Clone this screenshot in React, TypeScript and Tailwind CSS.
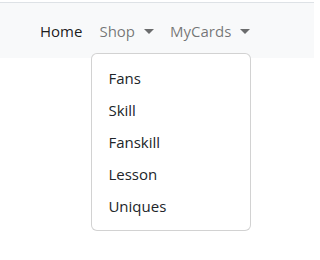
import { useState } from 'react'

const SHOP_ITEMS = ['Fans', 'Skill', 'Fanskill', 'Lesson', 'Uniques']

const Caret = () => (
  <span className="ml-[9px] inline-block align-[0.2em] border-x-[5px] border-t-[5px] border-x-transparent border-t-[#6b6c6d]" />
)

const App = () => {
  const [open, setOpen] = useState(true)

  return (
    <div className="h-[260px] w-[314px] bg-white pt-[2px] font-['Open_Sans','Noto_Sans',sans-serif] text-[15px] leading-6">
      <nav className="flex h-[56px] items-center border-t border-[#dee2e6] bg-[#f8f9fa] pl-[32px]">
        <ul className="flex">
          <li>
            <a className="block py-2 pl-2 pr-[9px] text-black/90">Home</a>
          </li>
          <li className="relative">
            <a className="block cursor-pointer px-2 py-2 text-black/55" onClick={() => setOpen(!open)}>
              Shop
              <Caret />
            </a>
            {open && (
              <ul className="absolute left-0 top-full z-10 mt-[2px] w-[160px] rounded-[6px] border border-black/[0.175] bg-white py-2">
                {SHOP_ITEMS.map((item) => (
                  <li key={item}>
                    <a className="block px-4 py-1 text-[#212529]">{item}</a>
                  </li>
                ))}
              </ul>
            )}
          </li>
          <li>
            <a className="block px-2 py-2 text-black/55">
              MyCards
              <Caret />
            </a>
          </li>
        </ul>
      </nav>
    </div>
  )
}

export default App
